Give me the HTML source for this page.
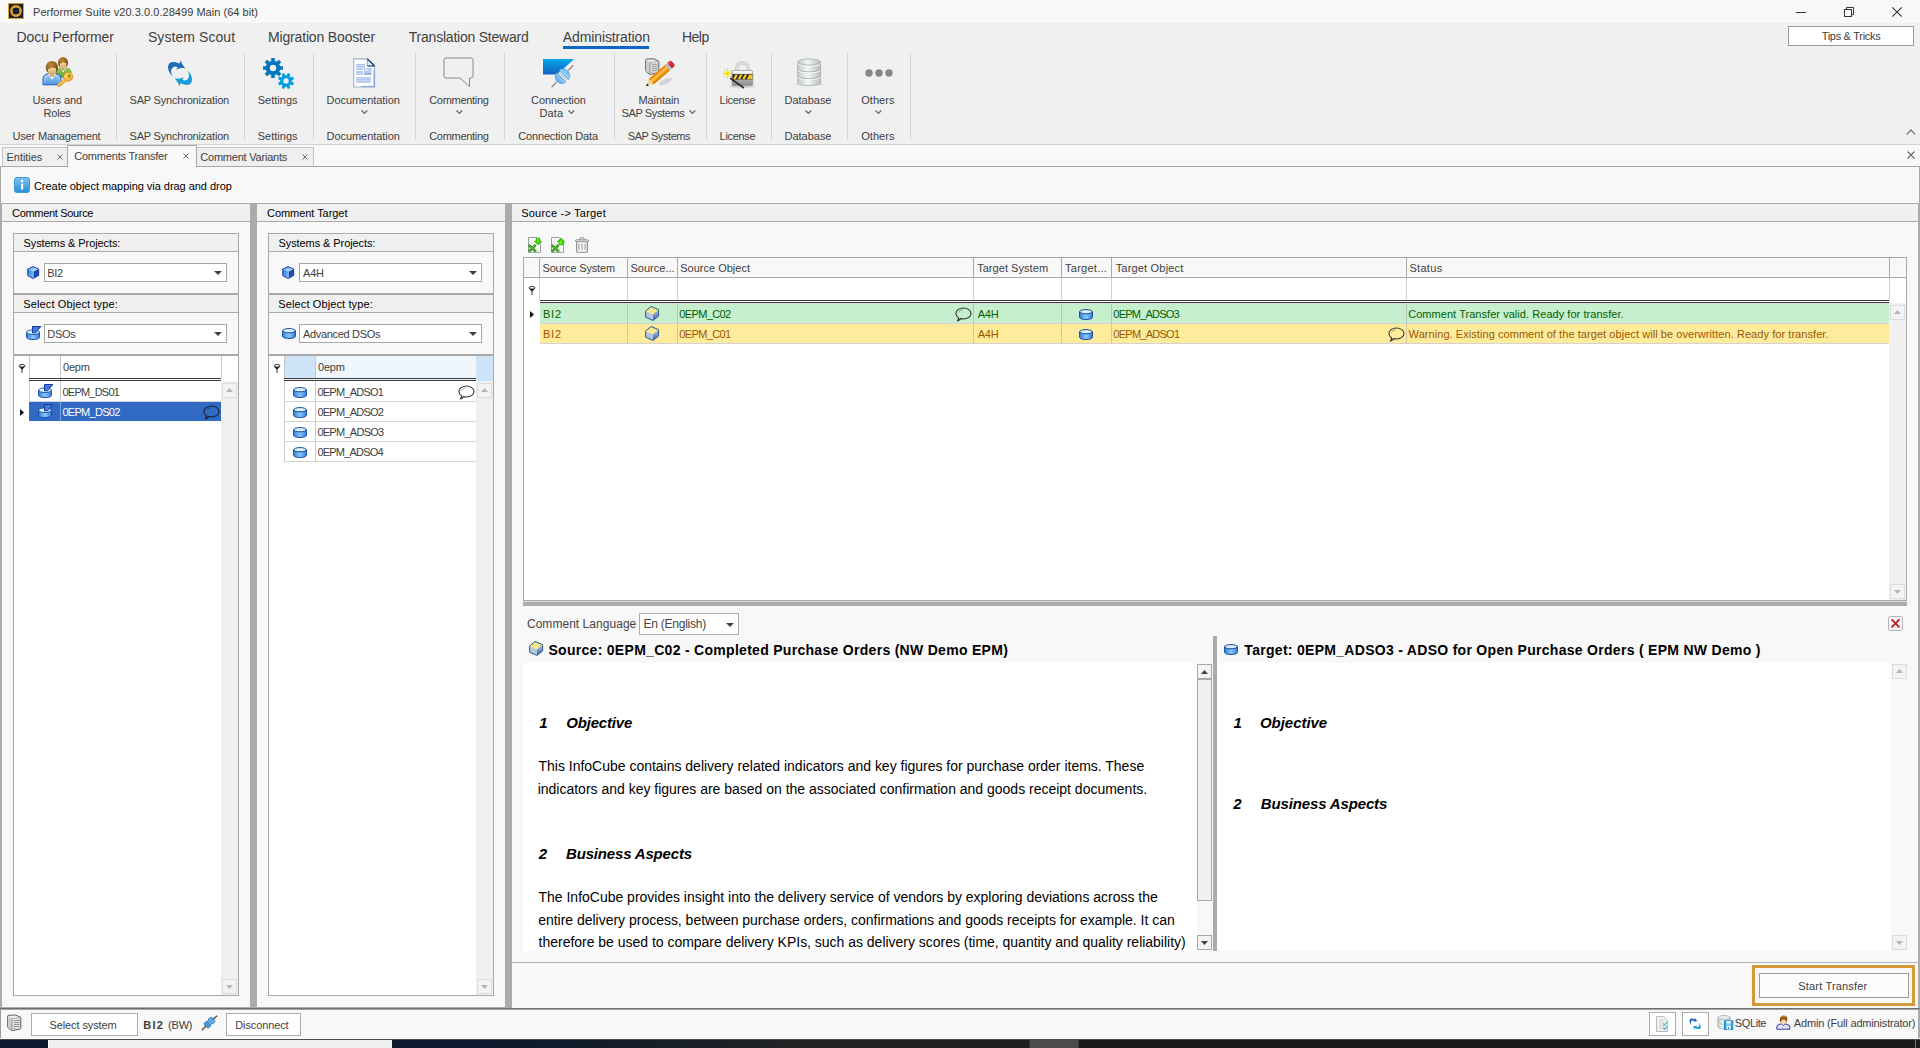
<!DOCTYPE html>
<html lang="en"><head><meta charset="utf-8"><title>Performer Suite - Comments Transfer</title>
<style>
html,body{margin:0;padding:0}
body{width:1920px;height:1048px;overflow:hidden;position:relative;background:#f8f8f8;font-family:"Liberation Sans",sans-serif;font-size:11px;line-height:20px}
div,span,svg,header,nav,main,footer,article{position:absolute}
header,nav,main,footer,article{left:0;top:0}
span{white-space:pre;line-height:20px;height:20px}
svg{overflow:visible}
</style></head>
<body>
<svg width="0" height="0" style="left:0;top:0"><defs>
<linearGradient id="gCylBody" x1="0" x2="1" y1="0" y2="0"><stop offset="0" stop-color="#3f7cdc"/><stop offset=".5" stop-color="#86c8fa"/><stop offset="1" stop-color="#3f7cdc"/></linearGradient>
<linearGradient id="gCubeTop" x1="0" x2="1" y1="0" y2="1"><stop offset="0" stop-color="#4aa8ff"/><stop offset="1" stop-color="#d8eeff"/></linearGradient>
<linearGradient id="gCubeL" x1="0" x2="1" y1="0" y2="1"><stop offset="0" stop-color="#2a78e8"/><stop offset="1" stop-color="#7cc4ff"/></linearGradient>
<linearGradient id="gCubeR" x1="0" x2="1" y1="0" y2="1"><stop offset="0" stop-color="#0a2f9a"/><stop offset="1" stop-color="#2a6cd0"/></linearGradient>
<linearGradient id="gInfo" x1="0" x2="0" y1="0" y2="1"><stop offset="0" stop-color="#7cc6f0"/><stop offset="1" stop-color="#2b8fd6"/></linearGradient>
<linearGradient id="gICr" x1="0" x2="0" y1="0" y2="1"><stop offset="0" stop-color="#b4c4e8"/><stop offset="1" stop-color="#4a58a8"/></linearGradient>
<linearGradient id="gDb" x1="0" x2="1" y1="0" y2="0"><stop offset="0" stop-color="#c2c8ca"/><stop offset=".45" stop-color="#f4f6f6"/><stop offset="1" stop-color="#b6bcbe"/></linearGradient>
<linearGradient id="gConn" x1="0" x2="0" y1="0" y2="1"><stop offset="0" stop-color="#00a8ec"/><stop offset="1" stop-color="#1660c0"/></linearGradient>
<linearGradient id="gLock" x1="0" x2="0" y1="0" y2="1"><stop offset="0" stop-color="#d8d8d8"/><stop offset="1" stop-color="#8c8c8c"/></linearGradient>
<linearGradient id="gShirt" x1="0" x2="0" y1="0" y2="1"><stop offset="0" stop-color="#a8d2f6"/><stop offset="1" stop-color="#4a92e2"/></linearGradient>
<linearGradient id="gDoc" x1="0" x2="1" y1="0" y2="1"><stop offset="0" stop-color="#ffffff"/><stop offset="1" stop-color="#eef2fd"/></linearGradient>
</defs></svg>
<header>
<div style="left:0px;top:0px;width:1920px;height:23px;background:#f8f8f8;"></div>
<svg style="left:8px;top:3px" width="16" height="16" viewBox="0 0 16 16"><rect x="0" y="0" width="16" height="16" fill="#d9a432"/><rect x="1" y="1" width="14" height="14" fill="#17202c"/>
<circle cx="8" cy="8" r="4.6" fill="none" stroke="#e0a530" stroke-width="2.6"/>
<rect x="6.2" y="6.2" width="3.6" height="3.6" fill="#17202c"/>
<path d="M4.2 6.5Q8 3.5 11.6 6M11.8 9.5Q8 12.5 4.4 10" stroke="#17202c" stroke-width=".7" fill="none"/></svg>
<span style="left:33.00px;top:2.00px;color:#3a3a3a;font-size:11px;letter-spacing:0.042px;">Performer Suite v20.3.0.0.28499 Main (64 bit)</span>
<div style="left:1796px;top:12px;width:10px;height:1px;background:#333;"></div>
<svg style="left:1844px;top:7px" width="10" height="10" viewBox="0 0 10 10"><path d="M2.5 2.5V0.5H9.5V7.5H7.5" fill="none" stroke="#333" stroke-width="1"/><rect x=".5" y="2.5" width="7" height="7" fill="none" stroke="#333" stroke-width="1"/></svg>
<svg style="left:1892px;top:7px" width="10" height="10" viewBox="0 0 10 10"><path d="M0.3 0.3L9.7 9.7M9.7 0.3L0.3 9.7" stroke="#333" stroke-width="1.1"/></svg>
</header>
<nav>
<div style="left:0px;top:23px;width:1920px;height:121px;background:#f0f0f0;"></div>
<div style="left:0px;top:144px;width:1920px;height:1px;background:#d2d2d2;"></div>
<span style="left:16.46px;top:27.00px;color:#404040;font-size:14px;letter-spacing:-0.102px;">Docu Performer</span>
<span style="left:147.97px;top:27.00px;color:#404040;font-size:14px;letter-spacing:0.067px;">System Scout</span>
<span style="left:267.96px;top:27.00px;color:#404040;font-size:14px;letter-spacing:-0.158px;">Migration Booster</span>
<span style="left:408.82px;top:27.00px;color:#404040;font-size:14px;letter-spacing:-0.224px;">Translation Steward</span>
<span style="left:562.87px;top:27.00px;color:#404040;font-size:14px;letter-spacing:-0.123px;">Administration</span>
<span style="left:681.96px;top:27.00px;color:#404040;font-size:14px;letter-spacing:-0.498px;">Help</span>
<div style="left:563px;top:46px;width:86px;height:3px;background:#0a64c2;"></div>
<div style="left:1788px;top:26px;width:126px;height:20px;background:#fff;border:1px solid #9b9b9b;box-sizing:border-box;"></div>
<span style="left:1821.64px;top:26.00px;color:#404040;font-size:11px;letter-spacing:-0.287px;">Tips &amp; Tricks</span>
<svg style="left:1906px;top:129px" width="10" height="6" viewBox="0 0 10 6"><path d="M0.7 5.4L5 1.1L9.3 5.4" fill="none" stroke="#6a6a6a" stroke-width="1.3"/></svg>
<div style="left:116px;top:53px;width:1px;height:87px;background:#d4d4d4;"></div>
<div style="left:244px;top:53px;width:1px;height:87px;background:#d4d4d4;"></div>
<div style="left:313px;top:53px;width:1px;height:87px;background:#d4d4d4;"></div>
<div style="left:415px;top:53px;width:1px;height:87px;background:#d4d4d4;"></div>
<div style="left:504px;top:53px;width:1px;height:87px;background:#d4d4d4;"></div>
<div style="left:614px;top:53px;width:1px;height:87px;background:#d4d4d4;"></div>
<div style="left:706px;top:53px;width:1px;height:87px;background:#d4d4d4;"></div>
<div style="left:771px;top:53px;width:1px;height:87px;background:#d4d4d4;"></div>
<div style="left:847px;top:53px;width:1px;height:87px;background:#d4d4d4;"></div>
<div style="left:910px;top:53px;width:1px;height:87px;background:#d4d4d4;"></div>
<svg style="left:41px;top:56px" width="32" height="32" viewBox="0 0 32 32"><defs><radialGradient id="gHair" cx=".4" cy=".3" r=".8"><stop offset="0" stop-color="#c08a3a"/><stop offset="1" stop-color="#6e3a12"/></radialGradient>
<linearGradient id="gFace" x1="0" x2="0" y1="0" y2="1"><stop offset="0" stop-color="#f6e09a"/><stop offset="1" stop-color="#c89a58"/></linearGradient>
<linearGradient id="gGreen" x1="0" x2="0" y1="0" y2="1"><stop offset="0" stop-color="#9cc860"/><stop offset="1" stop-color="#5e9a2a"/></linearGradient>
<linearGradient id="gKey" x1="0" x2="1" y1="0" y2="1"><stop offset="0" stop-color="#ffe27a"/><stop offset="1" stop-color="#f0a020"/></linearGradient></defs>
<path d="M14.8 21.6V16.5Q14.8 12.6 19 12H26Q30.1 12.6 30.1 16.5V21.6Z" fill="url(#gGreen)" stroke="#6a9a3a" stroke-width=".6"/>
<path d="M19.4 12.2L22.2 16.4L25 12.2Z" fill="#fff"/>
<ellipse cx="22" cy="6.6" rx="5.1" ry="5.6" fill="url(#gHair)"/>
<path d="M18.9 7.6Q20.6 7.6 22 6.2Q23.4 7.2 25.2 6.8V10.6Q25.2 12.2 23.6 12.6V14.4H20.4V12.6Q18.9 12 18.9 10.6Z" fill="url(#gFace)"/>
<path d="M2 28.8V23.2Q2 18.4 7 17.8H15Q19.8 18.4 19.8 23.2V28.8Z" fill="url(#gShirt)" stroke="#1a5ec8" stroke-width="1"/>
<path d="M3.4 27.6V23.4Q3.4 19.6 7.2 19H14.8Q18.4 19.6 18.4 23.4V27.6" fill="none" stroke="#cfe6fb" stroke-width=".7" opacity=".8"/>
<path d="M7.2 18L11 23.6L14.8 18Z" fill="#fff"/>
<ellipse cx="10.9" cy="11.4" rx="6.1" ry="6.5" fill="url(#gHair)"/>
<path d="M7 13Q9.2 13 11 11.2Q12.8 12.6 15 12V16.2Q15 18 13.2 18.6V20.4H9V18.6Q7 18 7 16.2Z" fill="url(#gFace)"/>
<path d="M16.8 30.2L16.6 28.4L23.4 22.2L25.6 24.6L23 27L21.6 26.8L21.4 28.4L19.8 28.4L19.6 30L18 30.4Z" fill="url(#gKey)" stroke="#d88a18" stroke-width=".7" stroke-linejoin="round"/>
<circle cx="27.2" cy="20.8" r="4.5" fill="url(#gKey)" stroke="#d88a18" stroke-width=".8"/>
<circle cx="28.1" cy="19.9" r="1.3" fill="#5a9a32" stroke="#d88a18" stroke-width=".4"/></svg>
<svg style="left:167px;top:59px" width="26.0" height="29.0" viewBox="0 0 26 29"><path d="M5.7 17.7C2 14 0 9 1.6 5.6C3 2.6 6.5 2.2 12.8 4.6L13.5 1.5C15 5 17 8 18.4 9.5C15 8.6 12 9.4 9 10.6L10.8 8.4C8.6 6.6 5.6 7.2 4.4 10.4C3.6 12.8 4.4 15.4 5.7 17.7Z" fill="#1c6cba"/><path d="M5.7 17.7C2 14 0 9 1.6 5.6C3 2.6 6.5 2.2 12.8 4.6L13.5 1.5C15 5 17 8 18.4 9.5C15 8.6 12 9.4 9 10.6L10.8 8.4C8.6 6.6 5.6 7.2 4.4 10.4C3.6 12.8 4.4 15.4 5.7 17.7Z" fill="#189cdc" transform="rotate(180 13.05 14.4)"/></svg>
<svg style="left:263px;top:57px" width="32" height="32" viewBox="0 0 32 32"><path d="M19.95 9.26L19.95 12.74L17.07 12.82L16.28 14.72L18.26 16.81L15.81 19.26L13.72 17.28L11.82 18.07L11.74 20.95L8.26 20.95L8.18 18.07L6.28 17.28L4.19 19.26L1.74 16.81L3.72 14.72L2.93 12.82L0.05 12.74L0.05 9.26L2.93 9.18L3.72 7.28L1.74 5.19L4.19 2.74L6.28 4.72L8.18 3.93L8.26 1.05L11.74 1.05L11.82 3.93L13.72 4.72L15.81 2.74L18.26 5.19L16.28 7.28L17.07 9.18ZM13.2 11A3.2 3.2 0 1 0 6.8 11A3.2 3.2 0 1 0 13.2 11Z" fill="#0075c2" fill-rule="evenodd"/>
<path d="M31.00 25.79L29.92 28.39L27.72 27.54L26.54 28.72L27.39 30.92L24.79 32.00L23.83 29.84L22.17 29.84L21.21 32.00L18.61 30.92L19.46 28.72L18.28 27.54L16.08 28.39L15.00 25.79L17.16 24.83L17.16 23.17L15.00 22.21L16.08 19.61L18.28 20.46L19.46 19.28L18.61 17.08L21.21 16.00L22.17 18.16L23.83 18.16L24.79 16.00L27.39 17.08L26.54 19.28L27.72 20.46L29.92 19.61L31.00 22.21L28.84 23.17L28.84 24.83ZM25.7 24A2.7 2.7 0 1 0 20.3 24A2.7 2.7 0 1 0 25.7 24Z" fill="#00a0e3" fill-rule="evenodd"/></svg>
<svg style="left:353px;top:57.5px" width="23" height="30" viewBox="0 0 23 30"><path d="M0.7 0.9H14.3L21.6 8V29H0.7Z" fill="#fff" stroke="#9db0d0" stroke-width="1.1"/>
<path d="M21 12V28.4H8" fill="none" stroke="#6f93e4" stroke-width="1" opacity=".8"/>
<path d="M14.3 0.9V8H21.6Z" fill="#dbe7fa" stroke="#8aa0c8" stroke-width="1"/><path d="M14.3 0.9L21.6 8" stroke="#1f3a6a" stroke-width="1.3"/><path d="M14.3 8H21.6" stroke="#2a4a80" stroke-width="1"/>
<g stroke="#7f9fe0" stroke-width="1"><path d="M3 6.9H12M3 8.9H12M3 11H10M3 14H10M3 16H10M3 19.9H18M3 21.9H18M3 23.9H18"/></g>
<rect x="11.2" y="10.6" width="6.8" height="5.8" fill="#b9cdf0" stroke="#9ab4e4" stroke-width=".6"/><path d="M11.8 11.2H15L12.4 13.6Z" fill="#f4f8fe"/><path d="M11.2 15.9H18" stroke="#7a9ad6" stroke-width="1"/></svg>
<svg style="left:443.3px;top:57.4px" width="31" height="31" viewBox="0 0 31 31"><path d="M3 1H28Q30 1 30 3V19Q30 21 28 21H26.5V29.5L17 21H3Q1 21 1 19V3Q1 1 3 1Z" fill="none" stroke="#8a8a8a" stroke-width="1" stroke-linejoin="round"/></svg>
<svg style="left:542px;top:58px" width="33" height="30" viewBox="0 0 33 30"><path d="M1 1H32L15.4 16.5H1Z" fill="url(#gConn)"/>
<g transform="rotate(-45 20.5 18.2)"><path d="M5 18.2H12M29 18.2H36" stroke="#8e8e8e" stroke-width="1.5"/><path d="M11.4 18.2L14 16.6V19.8ZM29.6 18.2L27 16.6V19.8Z" fill="#b8b8b8"/>
<path d="M19 11.6V24.8Q13 24 13 18.2T19 11.6Z" fill="#6cb4f0" stroke="#4a94dc" stroke-width=".5"/><path d="M22 11.6V24.8Q28 24 28 18.2T22 11.6Z" fill="#7cc0f4" stroke="#4a94dc" stroke-width=".5"/>
<path d="M17.2 12.2V24.2M23.8 12.2V24.2" stroke="#bfe0fa" stroke-width=".8"/><rect x="19.4" y="13" width="2.2" height="10.4" fill="#e8e4dc"/><path d="M20.5 13V23.4" stroke="#a8a8a8" stroke-width=".6"/></g></svg>
<svg style="left:645px;top:57px" width="31" height="31" viewBox="0 0 31 31"><g transform="translate(0,0.8)"><path d="M0.6 2.4Q0.6 1.4 1.6 1.3L8.4 1L13.4 3.2Q13.8 3.4 13.8 4V14Q13.8 14.8 13 15L5.4 16.6Q4.8 16.7 4.2 16.3L1 13.6Q0.6 13.3 0.6 12.8Z" fill="#ececec" stroke="#5c5c5c" stroke-width="1" stroke-linejoin="round"/>
<path d="M0.9 2.2L5 4.6V16.4L0.9 13.2Z" fill="#cdcdcd"/>
<path d="M5 4.6L13.6 3.8" stroke="#8a8a8a" stroke-width=".6"/><path d="M5 4.6V16.4" stroke="#7a7a7a" stroke-width=".8"/>
<g stroke="#8c8c8c" stroke-width="1"><path d="M6.6 6.4H12.6M6.6 8.4H12.6M6.6 10.4H12.6M6.6 12.4H12.6"/></g><path d="M6.6 14.3H12.6" stroke="#9a9a9a" stroke-width="1"/><rect x="8.6" y="13.7" width="1.3" height="1.2" fill="#fff"/><rect x="10.6" y="13.7" width="1.3" height="1.2" fill="#fff"/></g>
<ellipse cx="20.5" cy="24.6" rx="7" ry="2.2" fill="#b4b4b4" opacity=".5" transform="rotate(-25 20.5 24.6)"/>
<g transform="translate(-0.8,-0.7) rotate(-41 16 17.5)"><rect x="4" y="14" width="21.4" height="7.2" fill="#f8a410"/><rect x="4" y="14" width="21.4" height="2.2" fill="#ef8a10"/><rect x="4" y="16.2" width="21.4" height="1.6" fill="#fcc864"/><rect x="4" y="19.4" width="21.4" height="1.8" fill="#e08408"/>
<rect x="25.4" y="14" width="3" height="7.2" fill="#b8bcbc"/><path d="M28.4 14H31Q33 14 33 16V19.2Q33 21.2 31 21.2H28.4Z" fill="#cc2a34"/><path d="M28.4 15.4H32.6" stroke="#e8606a" stroke-width="1"/>
<path d="M4 14L-2.8 17.6L4 21.2Z" fill="#ead9a8"/><path d="M-0.2 16.2L-3 17.6L-0.2 19Z" fill="#1c1c1c"/></g></svg>
<svg style="left:722px;top:60px" width="32" height="29" viewBox="0 0 32 29"><ellipse cx="20" cy="26.4" rx="13" ry="1.8" fill="#c8c8c8" opacity=".55"/>
<path d="M14.8 11V8.6C14.8 4.6 17.2 3 20.4 3S26.1 4.6 26.1 8.6V11" fill="none" stroke="#cfcfcf" stroke-width="3.7"/>
<path d="M14.8 11V8.6C14.8 4.6 17.2 3 20.4 3S26.1 4.6 26.1 8.6V11" fill="none" stroke="#e6e6e6" stroke-width="1.2"/>
<rect x="10" y="10.4" width="20.8" height="15.4" rx="1.6" fill="url(#gLock)" stroke="#9a9a9a" stroke-width=".7"/>
<rect x="10.8" y="11" width="19.2" height="2.6" rx="1" fill="#f6f6f6"/>
<rect x="10.4" y="14.1" width="20" height="5.4" fill="#20242c"/>
<g fill="#f8c420"><polygon points="11,19.2 13.4,14.4 16,14.4 13.6,19.2"/><polygon points="15.6,19.2 18,14.4 20.6,14.4 18.2,19.2"/><polygon points="20.2,19.2 22.6,14.4 25.2,14.4 22.8,19.2"/><polygon points="24.8,19.2 27.2,14.4 29.6,14.4 30.4,16 30.4,19.2"/></g>
<path d="M8.3 18.3L21.9 28" stroke="#2c2c2c" stroke-width="1.7"/>
<g stroke="#9a9a5a" stroke-width=".8" opacity=".8"><path d="M5.45 8.8V18.4M0.8 13.6H10.2M2.2 10.4L8.7 16.8M8.7 10.4L2.2 16.8"/></g><circle cx="5.45" cy="13.6" r="3.4" fill="#fdf28a"/><circle cx="5.45" cy="13.6" r="2" fill="#f8e000"/></svg>
<svg style="left:796.8px;top:57.7px" width="24.3" height="28.4" viewBox="0 0 25 29"><ellipse cx="12.5" cy="27" rx="15" ry="1.8" fill="#c4c4c4" opacity=".45"/>
<path d="M0.7 4V25C0.7 26.8 6 28.2 12.5 28.2S24.3 26.8 24.3 25V4Z" fill="url(#gDb)" stroke="#aab2b6" stroke-width=".9"/>
<path d="M0.7 11C0.7 12.8 6 14.2 12.5 14.2S24.3 12.8 24.3 11M0.7 18C0.7 19.8 6 21.2 12.5 21.2S24.3 19.8 24.3 18" fill="none" stroke="#a4acb0" stroke-width="1"/>
<path d="M1.2 12.2C1.2 14 6 15.3 12.5 15.3S23.8 14 23.8 12.2M1.2 19.2C1.2 21 6 22.3 12.5 22.3S23.8 21 23.8 19.2M1.2 5.4C1.2 7 6 8.3 12.5 8.3S23.8 7 23.8 5.4" fill="none" stroke="#fbfbfb" stroke-width="1"/>
<ellipse cx="12.5" cy="4" rx="11.8" ry="3.1" fill="url(#gDb)" stroke="#aab2b6" stroke-width=".9"/></svg>
<svg style="left:865px;top:69px" width="28" height="8" viewBox="0 0 28 8"><circle cx="4" cy="4" r="3.7" fill="#868686"/><circle cx="14" cy="4" r="3.7" fill="#868686"/><circle cx="24" cy="4" r="3.7" fill="#868686"/></svg>
<span style="left:32.45px;top:90.00px;color:#404040;font-size:11px;letter-spacing:-0.057px;">Users and</span>
<span style="left:43.50px;top:103.00px;color:#404040;font-size:11px;letter-spacing:-0.209px;">Roles</span>
<span style="left:129.50px;top:90.00px;color:#404040;font-size:11px;letter-spacing:-0.191px;">SAP Synchronization</span>
<span style="left:257.75px;top:90.00px;color:#404040;font-size:11px;letter-spacing:0.004px;">Settings</span>
<span style="left:326.50px;top:90.00px;color:#404040;font-size:11px;letter-spacing:-0.052px;">Documentation</span>
<span style="left:429.22px;top:90.00px;color:#404040;font-size:11px;letter-spacing:-0.292px;">Commenting</span>
<span style="left:531.07px;top:90.00px;color:#404040;font-size:11px;letter-spacing:-0.096px;">Connection</span>
<span style="left:539.60px;top:103.00px;color:#404040;font-size:11px;letter-spacing:0.077px;">Data</span>
<span style="left:638.40px;top:90.00px;color:#404040;font-size:11px;letter-spacing:-0.079px;">Maintain</span>
<span style="left:621.50px;top:103.00px;color:#404040;font-size:11px;letter-spacing:-0.384px;">SAP Systems</span>
<span style="left:719.60px;top:90.00px;color:#404040;font-size:11px;letter-spacing:-0.313px;">License</span>
<span style="left:784.60px;top:90.00px;color:#404040;font-size:11px;letter-spacing:-0.030px;">Database</span>
<span style="left:861.13px;top:90.00px;color:#404040;font-size:11px;letter-spacing:0.077px;">Others</span>
<svg style="left:360.5px;top:110px" width="7" height="5" viewBox="0 0 7 5"><path d="M0.5 0.5L3.4 3.3L6.3 0.5" fill="none" stroke="#6c6c6c" stroke-width="1.3"/></svg>
<svg style="left:455.5px;top:110px" width="7" height="5" viewBox="0 0 7 5"><path d="M0.5 0.5L3.4 3.3L6.3 0.5" fill="none" stroke="#6c6c6c" stroke-width="1.3"/></svg>
<svg style="left:568px;top:110px" width="7" height="5" viewBox="0 0 7 5"><path d="M0.5 0.5L3.4 3.3L6.3 0.5" fill="none" stroke="#6c6c6c" stroke-width="1.3"/></svg>
<svg style="left:688.5px;top:110px" width="7" height="5" viewBox="0 0 7 5"><path d="M0.5 0.5L3.4 3.3L6.3 0.5" fill="none" stroke="#6c6c6c" stroke-width="1.3"/></svg>
<svg style="left:804.5px;top:110px" width="7" height="5" viewBox="0 0 7 5"><path d="M0.5 0.5L3.4 3.3L6.3 0.5" fill="none" stroke="#6c6c6c" stroke-width="1.3"/></svg>
<svg style="left:875px;top:110px" width="7" height="5" viewBox="0 0 7 5"><path d="M0.5 0.5L3.4 3.3L6.3 0.5" fill="none" stroke="#6c6c6c" stroke-width="1.3"/></svg>
<span style="left:12.45px;top:126.00px;color:#404040;font-size:11px;letter-spacing:-0.162px;">User Management</span>
<span style="left:129.50px;top:126.00px;color:#404040;font-size:11px;letter-spacing:-0.191px;">SAP Synchronization</span>
<span style="left:257.75px;top:126.00px;color:#404040;font-size:11px;letter-spacing:0.004px;">Settings</span>
<span style="left:326.50px;top:126.00px;color:#404040;font-size:11px;letter-spacing:-0.052px;">Documentation</span>
<span style="left:429.22px;top:126.00px;color:#404040;font-size:11px;letter-spacing:-0.292px;">Commenting</span>
<span style="left:518.22px;top:126.00px;color:#404040;font-size:11px;letter-spacing:-0.154px;">Connection Data</span>
<span style="left:627.75px;top:126.00px;color:#404040;font-size:11px;letter-spacing:-0.422px;">SAP Systems</span>
<span style="left:719.60px;top:126.00px;color:#404040;font-size:11px;letter-spacing:-0.313px;">License</span>
<span style="left:784.60px;top:126.00px;color:#404040;font-size:11px;letter-spacing:-0.030px;">Database</span>
<span style="left:861.13px;top:126.00px;color:#404040;font-size:11px;letter-spacing:0.077px;">Others</span>
</nav>
<main>
<div style="left:0px;top:145px;width:1920px;height:22px;background:#f8f8f8;"></div>
<div style="left:0px;top:166px;width:1920px;height:1px;background:#a9a9a9;"></div>
<div style="left:2px;top:147px;width:66px;height:20px;background:#efefef;border:1px solid #c4c4c4;box-sizing:border-box;border-bottom:1px solid #a9a9a9;"></div>
<div style="left:196px;top:147px;width:118px;height:20px;background:#efefef;border:1px solid #c4c4c4;box-sizing:border-box;border-bottom:1px solid #a9a9a9;"></div>
<div style="left:67px;top:145px;width:130px;height:22px;background:#f8f8f8;border:1px solid #a9a9a9;box-sizing:border-box;border-bottom:none;"></div>
<span style="left:6.50px;top:147.00px;color:#404040;font-size:11px;letter-spacing:-0.032px;">Entities</span>
<svg style="left:57px;top:154px" width="6" height="6" viewBox="0 0 6 6"><path d="M0.5 0.5L5.5 5.5M5.5 0.5L0.5 5.5" stroke="#6e6e6e" stroke-width="1" fill="none"/></svg>
<span style="left:74.17px;top:146.00px;color:#404040;font-size:11px;letter-spacing:-0.190px;">Comments Transfer</span>
<svg style="left:183px;top:153px" width="6" height="6" viewBox="0 0 6 6"><path d="M0.5 0.5L5.5 5.5M5.5 0.5L0.5 5.5" stroke="#6e6e6e" stroke-width="1" fill="none"/></svg>
<span style="left:200.27px;top:147.00px;color:#404040;font-size:11px;letter-spacing:-0.213px;">Comment Variants</span>
<svg style="left:302px;top:154px" width="6" height="6" viewBox="0 0 6 6"><path d="M0.5 0.5L5.5 5.5M5.5 0.5L0.5 5.5" stroke="#6e6e6e" stroke-width="1" fill="none"/></svg>
<svg style="left:1907px;top:151.2px" width="8" height="8" viewBox="0 0 8 8"><path d="M0.5 0.5L7.5 7.5M7.5 0.5L0.5 7.5" stroke="#6a6a6a" stroke-width="1.1" fill="none"/></svg>
<div style="left:0px;top:167px;width:1920px;height:843px;background:#f8f8f8;"></div>
<div style="left:0px;top:167px;width:1px;height:37px;background:#a9a9a9;"></div>
<div style="left:1919px;top:167px;width:1px;height:37px;background:#a9a9a9;"></div>
<svg style="left:14px;top:177px" width="16" height="16" viewBox="0 0 16 16"><rect x=".5" y=".5" width="15" height="15" rx="2.5" fill="url(#gInfo)" stroke="#3f9ad8" stroke-width="1"/>
<rect x="7" y="6.5" width="2.2" height="6" rx=".6" fill="#fff"/><circle cx="8.1" cy="4" r="1.3" fill="#fff"/></svg>
<span style="left:33.97px;top:176.00px;color:#000;font-size:11px;letter-spacing:-0.038px;">Create object mapping via drag and drop</span>
<div style="left:0px;top:203px;width:2px;height:805px;background:#ababab;"></div>
<div style="left:2px;top:203px;width:248px;height:1px;background:#a9a9a9;"></div>
<div style="left:2px;top:204px;width:248px;height:17px;background:#f0f0f0;"></div>
<div style="left:2px;top:221px;width:248px;height:1px;background:#a9a9a9;"></div>
<span style="left:12.07px;top:203.00px;color:#000;font-size:11px;letter-spacing:-0.324px;">Comment Source</span>
<div style="left:250px;top:204px;width:7px;height:804px;background:#ababab;"></div>
<div style="left:257px;top:203px;width:248px;height:1px;background:#a9a9a9;"></div>
<div style="left:257px;top:204px;width:248px;height:17px;background:#f0f0f0;"></div>
<div style="left:257px;top:221px;width:248px;height:1px;background:#a9a9a9;"></div>
<span style="left:267.07px;top:203.00px;color:#000;font-size:11px;letter-spacing:-0.056px;">Comment Target</span>
<div style="left:505px;top:204px;width:7px;height:804px;background:#ababab;"></div>
<div style="left:512px;top:203px;width:1406px;height:1px;background:#a9a9a9;"></div>
<div style="left:512px;top:204px;width:1406px;height:17px;background:#f0f0f0;"></div>
<div style="left:512px;top:221px;width:1406px;height:1px;background:#a9a9a9;"></div>
<span style="left:521.20px;top:203.00px;color:#000;font-size:11px;letter-spacing:0.208px;">Source -> Target</span>
<div style="left:1918px;top:203px;width:2px;height:836px;background:#ababab;"></div>
<div style="left:0px;top:203px;width:1920px;height:1px;background:#a9a9a9;"></div>
<div style="left:0px;top:1007px;width:512px;height:1px;background:#ababab;"></div>
<div style="left:13px;top:233px;width:226px;height:61px;border:1px solid #a9a9a9;box-sizing:border-box;"></div>
<div style="left:14px;top:234px;width:224px;height:17px;background:#f0f0f0;"></div>
<div style="left:14px;top:251px;width:224px;height:1px;background:#a9a9a9;"></div>
<span style="left:23.50px;top:233.00px;color:#000;font-size:11px;letter-spacing:-0.083px;">Systems &amp; Projects:</span>
<svg style="left:26.9px;top:266.3px" width="12.2" height="13.2" viewBox="0 0 13 14"><polygon points="6.5,0.6 12.4,3.2 6.8,6.2 0.8,3.2" fill="url(#gCubeTop)"/>
<polygon points="0.8,3.2 6.8,6.2 6.6,13.4 0.8,10.2" fill="url(#gCubeL)"/>
<polygon points="6.8,6.2 12.4,3.2 12.4,10 6.6,13.4" fill="url(#gCubeR)"/>
<polygon points="6.5,0.6 12.4,3.2 12.4,10 6.6,13.4 0.8,10.2 0.8,3.2" fill="none" stroke="#1a2c9c" stroke-width="1" stroke-linejoin="round"/>
<path d="M6.8 6.2V13" stroke="#cfe6ff" stroke-width=".7" opacity=".8"/></svg>
<div style="left:44px;top:263px;width:183px;height:19px;background:#fff;border:1px solid #a6a6a6;box-sizing:border-box;"></div>
<span style="left:47.20px;top:263.00px;color:#404040;font-size:11px;letter-spacing:-0.250px;">BI2</span>
<svg style="left:214px;top:271px" width="8" height="4" viewBox="0 0 8 4"><polygon points="0,0 8,0 4.0,4" fill="#404040"/></svg>
<div style="left:13px;top:294px;width:226px;height:61px;border:1px solid #a9a9a9;box-sizing:border-box;"></div>
<div style="left:14px;top:295px;width:224px;height:17px;background:#f0f0f0;"></div>
<div style="left:14px;top:312px;width:224px;height:1px;background:#a9a9a9;"></div>
<span style="left:23.30px;top:294.00px;color:#000;font-size:11px;letter-spacing:0.116px;">Select Object type:</span>
<div style="left:44px;top:324px;width:183px;height:19px;background:#fff;border:1px solid #a6a6a6;box-sizing:border-box;"></div>
<span style="left:47.20px;top:324.00px;color:#404040;font-size:11px;letter-spacing:-0.250px;">DSOs</span>
<svg style="left:214px;top:332px" width="8" height="4" viewBox="0 0 8 4"><polygon points="0,0 8,0 4.0,4" fill="#404040"/></svg>
<div style="left:13px;top:355px;width:226px;height:641px;background:#fff;border:1px solid #a9a9a9;box-sizing:border-box;"></div>
<svg style="left:17.5px;top:363.5px" width="8" height="10" viewBox="0 0 8 10"><ellipse cx="4" cy="1.9" rx="3" ry="1.4" fill="#fff" stroke="#222" stroke-width=".9"/>
<path d="M1.2 2.7L3.55 5.4V8.9H4.45V5.4L6.8 2.7Z" fill="#222"/></svg>
<div style="left:221px;top:381px;width:17px;height:614px;background:#f0f0f0;"></div>
<div style="left:222px;top:383px;width:15px;height:15px;background:#f3f3f3;border:1px solid #dcdcdc;box-sizing:border-box;"></div>
<svg style="left:226.0px;top:388.0px" width="7" height="4" viewBox="0 0 7 4"><polygon points="0,4 7,4 3.5,0" fill="#b4b4b4"/></svg>
<div style="left:222px;top:979px;width:15px;height:15px;background:#f3f3f3;border:1px solid #dcdcdc;box-sizing:border-box;"></div>
<svg style="left:226.0px;top:985.0px" width="7" height="4" viewBox="0 0 7 4"><polygon points="0,0 7,0 3.5,4" fill="#b4b4b4"/></svg>
<div style="left:268px;top:233px;width:226px;height:61px;border:1px solid #a9a9a9;box-sizing:border-box;"></div>
<div style="left:269px;top:234px;width:224px;height:17px;background:#f0f0f0;"></div>
<div style="left:269px;top:251px;width:224px;height:1px;background:#a9a9a9;"></div>
<span style="left:278.50px;top:233.00px;color:#000;font-size:11px;letter-spacing:-0.083px;">Systems &amp; Projects:</span>
<svg style="left:281.9px;top:266.3px" width="12.2" height="13.2" viewBox="0 0 13 14"><polygon points="6.5,0.6 12.4,3.2 6.8,6.2 0.8,3.2" fill="url(#gCubeTop)"/>
<polygon points="0.8,3.2 6.8,6.2 6.6,13.4 0.8,10.2" fill="url(#gCubeL)"/>
<polygon points="6.8,6.2 12.4,3.2 12.4,10 6.6,13.4" fill="url(#gCubeR)"/>
<polygon points="6.5,0.6 12.4,3.2 12.4,10 6.6,13.4 0.8,10.2 0.8,3.2" fill="none" stroke="#1a2c9c" stroke-width="1" stroke-linejoin="round"/>
<path d="M6.8 6.2V13" stroke="#cfe6ff" stroke-width=".7" opacity=".8"/></svg>
<div style="left:299px;top:263px;width:183px;height:19px;background:#fff;border:1px solid #a6a6a6;box-sizing:border-box;"></div>
<span style="left:303.06px;top:263.00px;color:#404040;font-size:11px;letter-spacing:-0.250px;">A4H</span>
<svg style="left:469px;top:271px" width="8" height="4" viewBox="0 0 8 4"><polygon points="0,0 8,0 4.0,4" fill="#404040"/></svg>
<div style="left:268px;top:294px;width:226px;height:61px;border:1px solid #a9a9a9;box-sizing:border-box;"></div>
<div style="left:269px;top:295px;width:224px;height:17px;background:#f0f0f0;"></div>
<div style="left:269px;top:312px;width:224px;height:1px;background:#a9a9a9;"></div>
<span style="left:278.30px;top:294.00px;color:#000;font-size:11px;letter-spacing:0.116px;">Select Object type:</span>
<div style="left:299px;top:324px;width:183px;height:19px;background:#fff;border:1px solid #a6a6a6;box-sizing:border-box;"></div>
<span style="left:303.06px;top:324.00px;color:#404040;font-size:11px;letter-spacing:-0.324px;">Advanced DSOs</span>
<svg style="left:469px;top:332px" width="8" height="4" viewBox="0 0 8 4"><polygon points="0,0 8,0 4.0,4" fill="#404040"/></svg>
<div style="left:268px;top:355px;width:226px;height:641px;background:#fff;border:1px solid #a9a9a9;box-sizing:border-box;"></div>
<svg style="left:272.5px;top:363.5px" width="8" height="10" viewBox="0 0 8 10"><ellipse cx="4" cy="1.9" rx="3" ry="1.4" fill="#fff" stroke="#222" stroke-width=".9"/>
<path d="M1.2 2.7L3.55 5.4V8.9H4.45V5.4L6.8 2.7Z" fill="#222"/></svg>
<div style="left:476px;top:381px;width:17px;height:614px;background:#f0f0f0;"></div>
<div style="left:477px;top:383px;width:15px;height:15px;background:#f3f3f3;border:1px solid #dcdcdc;box-sizing:border-box;"></div>
<svg style="left:481.0px;top:388.0px" width="7" height="4" viewBox="0 0 7 4"><polygon points="0,4 7,4 3.5,0" fill="#b4b4b4"/></svg>
<div style="left:477px;top:979px;width:15px;height:15px;background:#f3f3f3;border:1px solid #dcdcdc;box-sizing:border-box;"></div>
<svg style="left:481.0px;top:985.0px" width="7" height="4" viewBox="0 0 7 4"><polygon points="0,0 7,0 3.5,4" fill="#b4b4b4"/></svg>
<svg style="left:26px;top:326px" width="16" height="14" viewBox="0 0 16 14"><path d="M0.6 6.3V11.2C0.6 12.7 3.4 13.6 7 13.6S13.4 12.7 13.4 11.2V6.3Z" fill="url(#gCylBody)" stroke="#0a4a9e" stroke-width="1"/>
<ellipse cx="7" cy="6.2" rx="6.4" ry="2.3" fill="#e6effc" stroke="#0a4a9e" stroke-width=".9"/>
<polygon points="6.5,0.5 14.8,0.5 9.6,6.8 6.5,6.8" fill="#4f74dc" stroke="#0b3fa0" stroke-width="1" stroke-linejoin="round"/></svg>
<svg style="left:282px;top:328px" width="14" height="11" viewBox="0 0 14 11"><path d="M0.6 2.8V8.2C0.6 9.6 3.4 10.5 7 10.5S13.4 9.6 13.4 8.2V2.8Z" fill="url(#gCylBody)" stroke="#0a4a9e" stroke-width="1"/>
<ellipse cx="7" cy="2.7" rx="6.3" ry="2.1" fill="#e4eefc" stroke="#0a4a9e" stroke-width="1"/></svg>
<div style="left:29px;top:356px;width:1px;height:65px;background:#c8c8c8;"></div>
<div style="left:60px;top:356px;width:1px;height:46px;background:#c8c8c8;"></div>
<div style="left:221px;top:356px;width:1px;height:22px;background:#c8c8c8;"></div>
<span style="left:62.99px;top:357.00px;color:#404040;font-size:11px;letter-spacing:-0.182px;">0epm</span>
<div style="left:29px;top:378px;width:192px;height:1px;background:#3c3c3c;"></div>
<div style="left:29px;top:380px;width:192px;height:1px;background:#3c3c3c;"></div>
<svg style="left:37.5px;top:384px" width="16" height="14" viewBox="0 0 16 14"><path d="M0.6 6.3V11.2C0.6 12.7 3.4 13.6 7 13.6S13.4 12.7 13.4 11.2V6.3Z" fill="url(#gCylBody)" stroke="#0a4a9e" stroke-width="1"/>
<ellipse cx="7" cy="6.2" rx="6.4" ry="2.3" fill="#e6effc" stroke="#0a4a9e" stroke-width=".9"/>
<polygon points="6.5,0.5 14.8,0.5 9.6,6.8 6.5,6.8" fill="#4f74dc" stroke="#0b3fa0" stroke-width="1" stroke-linejoin="round"/></svg>
<span style="left:62.49px;top:382.00px;color:#404040;font-size:11px;letter-spacing:-0.777px;">0EPM_DS01</span>
<div style="left:29px;top:401px;width:192px;height:1px;background:#d6d6d6;"></div>
<div style="left:29px;top:402px;width:192px;height:19px;background:#316ac5;"></div>
<div style="left:60px;top:402px;width:1px;height:19px;background:#7a9fdc;"></div>
<svg style="left:37.5px;top:404px" width="16" height="14" viewBox="0 0 16 14"><path d="M0.6 6.3V11.2C0.6 12.7 3.4 13.6 7 13.6S13.4 12.7 13.4 11.2V6.3Z" fill="url(#gCylBody)" stroke="#0a4a9e" stroke-width="1"/>
<ellipse cx="7" cy="6.2" rx="6.4" ry="2.3" fill="#e6effc" stroke="#0a4a9e" stroke-width=".9"/>
<polygon points="6.5,0.5 14.8,0.5 9.6,6.8 6.5,6.8" fill="#4f74dc" stroke="#0b3fa0" stroke-width="1" stroke-linejoin="round"/></svg>
<span style="left:62.49px;top:402.00px;color:#fff;font-size:11px;letter-spacing:-0.728px;">0EPM_DS02</span>
<svg style="left:202.5px;top:404.5px" width="17" height="15" viewBox="0 0 17 15"><path d="M8.4 1C12.6 1 16 3.4 16 6.5S12.6 12 8.4 12C7.3 12 6.3 11.85 5.4 11.6C4.6 12.8 3.6 13.6 2.4 14C3.1 13.1 3.5 12 3.5 10.7C1.9 9.7 0.9 8.2 0.9 6.5C0.9 3.4 4.2 1 8.4 1Z" fill="none" stroke="#1c1c2c" stroke-width="1.1" stroke-linejoin="round"/>
<path d="M3.2 5.6C4.2 3.9 6 3 8 2.8" fill="none" stroke="#1c1c2c" stroke-width=".6" opacity=".7"/></svg>
<svg style="left:20px;top:408.5px" width="4" height="7" viewBox="0 0 4 7"><polygon points="0,0 4,3.5 0,7" fill="#111"/></svg>
<div style="left:284px;top:356px;width:31px;height:22px;background:#cde3f7;"></div>
<div style="left:315px;top:356px;width:161px;height:22px;background:#eff7fd;"></div>
<div style="left:476px;top:356px;width:17px;height:25px;background:#cde3f7;"></div>
<div style="left:284px;top:356px;width:1px;height:106px;background:#c8c8c8;"></div>
<div style="left:315px;top:356px;width:1px;height:106px;background:#c8c8c8;"></div>
<span style="left:317.99px;top:357.00px;color:#404040;font-size:11px;letter-spacing:-0.182px;">0epm</span>
<div style="left:284px;top:378px;width:192px;height:1px;background:#3c3c3c;"></div>
<div style="left:284px;top:379px;width:192px;height:1px;background:#eaf2fa;"></div>
<div style="left:284px;top:380px;width:192px;height:1px;background:#3c3c3c;"></div>
<svg style="left:293px;top:386.5px" width="14" height="11" viewBox="0 0 14 11"><path d="M0.6 2.8V8.2C0.6 9.6 3.4 10.5 7 10.5S13.4 9.6 13.4 8.2V2.8Z" fill="url(#gCylBody)" stroke="#0a4a9e" stroke-width="1"/>
<ellipse cx="7" cy="2.7" rx="6.3" ry="2.1" fill="#e4eefc" stroke="#0a4a9e" stroke-width="1"/></svg>
<span style="left:317.39px;top:382.00px;color:#404040;font-size:11px;letter-spacing:-0.756px;">0EPM_ADSO1</span>
<div style="left:284px;top:401px;width:192px;height:1px;background:#d6d6d6;"></div>
<svg style="left:293px;top:406.5px" width="14" height="11" viewBox="0 0 14 11"><path d="M0.6 2.8V8.2C0.6 9.6 3.4 10.5 7 10.5S13.4 9.6 13.4 8.2V2.8Z" fill="url(#gCylBody)" stroke="#0a4a9e" stroke-width="1"/>
<ellipse cx="7" cy="2.7" rx="6.3" ry="2.1" fill="#e4eefc" stroke="#0a4a9e" stroke-width="1"/></svg>
<span style="left:317.39px;top:402.00px;color:#404040;font-size:11px;letter-spacing:-0.759px;">0EPM_ADSO2</span>
<div style="left:284px;top:421px;width:192px;height:1px;background:#d6d6d6;"></div>
<svg style="left:293px;top:426.5px" width="14" height="11" viewBox="0 0 14 11"><path d="M0.6 2.8V8.2C0.6 9.6 3.4 10.5 7 10.5S13.4 9.6 13.4 8.2V2.8Z" fill="url(#gCylBody)" stroke="#0a4a9e" stroke-width="1"/>
<ellipse cx="7" cy="2.7" rx="6.3" ry="2.1" fill="#e4eefc" stroke="#0a4a9e" stroke-width="1"/></svg>
<span style="left:317.39px;top:422.00px;color:#404040;font-size:11px;letter-spacing:-0.728px;">0EPM_ADSO3</span>
<div style="left:284px;top:441px;width:192px;height:1px;background:#d6d6d6;"></div>
<svg style="left:293px;top:446.5px" width="14" height="11" viewBox="0 0 14 11"><path d="M0.6 2.8V8.2C0.6 9.6 3.4 10.5 7 10.5S13.4 9.6 13.4 8.2V2.8Z" fill="url(#gCylBody)" stroke="#0a4a9e" stroke-width="1"/>
<ellipse cx="7" cy="2.7" rx="6.3" ry="2.1" fill="#e4eefc" stroke="#0a4a9e" stroke-width="1"/></svg>
<span style="left:317.39px;top:442.00px;color:#404040;font-size:11px;letter-spacing:-0.797px;">0EPM_ADSO4</span>
<div style="left:284px;top:461px;width:192px;height:1px;background:#d6d6d6;"></div>
<svg style="left:457.5px;top:384.5px" width="17" height="15" viewBox="0 0 17 15"><path d="M8.4 1C12.6 1 16 3.4 16 6.5S12.6 12 8.4 12C7.3 12 6.3 11.85 5.4 11.6C4.6 12.8 3.6 13.6 2.4 14C3.1 13.1 3.5 12 3.5 10.7C1.9 9.7 0.9 8.2 0.9 6.5C0.9 3.4 4.2 1 8.4 1Z" fill="none" stroke="#333" stroke-width="1.1" stroke-linejoin="round"/>
<path d="M3.2 5.6C4.2 3.9 6 3 8 2.8" fill="none" stroke="#333" stroke-width=".6" opacity=".7"/></svg>
<svg style="left:528px;top:237px" width="15" height="16" viewBox="0 0 15 16"><path d="M0.5 0.5H8.2L12.5 4.2V15.3H0.5Z" fill="#fdfdfd" stroke="#9c9c9c" stroke-width="1"/><rect x="2" y="2.6" width="3.4" height="3.6" fill="#ececec"/>
<polygon points="8,1 12,1 12,4 14,4 10,8.2 6,4 8,4" fill="#36cc10" stroke="#28b008" stroke-width=".4" stroke-linejoin="round"/><polygon points="9,2 11,2 11,5 10,6.4 9,5" fill="#8cf000" opacity=".7"/>
<path d="M0.8 8L8 14.6M7.6 8L0.8 14.6" stroke="#1f8a04" stroke-width="2.5"/><path d="M1 8L8.2 14.8M7.4 8.2L1 14.4" stroke="#a4dc84" stroke-width=".7"/></svg>
<svg style="left:551px;top:237px" width="15" height="16" viewBox="0 0 15 16"><path d="M0.5 0.5H8.2L12.5 4.2V15.3H0.5Z" fill="#fdfdfd" stroke="#9c9c9c" stroke-width="1"/><rect x="2" y="2.6" width="3.4" height="3.6" fill="#ececec"/>
<polygon points="10,0.8 14,5 12,5 12,8 8,8 8,5 6,5" fill="#36cc10" stroke="#28b008" stroke-width=".4" stroke-linejoin="round"/><polygon points="10,2.6 11,4 11,7 9,7 9,4" fill="#8cf000" opacity=".7"/>
<path d="M0.8 8L8 14.6M7.6 8L0.8 14.6" stroke="#1f8a04" stroke-width="2.5"/><path d="M1 8L8.2 14.8M7.4 8.2L1 14.4" stroke="#a4dc84" stroke-width=".7"/></svg>
<svg style="left:575px;top:236.5px" width="14" height="16" viewBox="0 0 14 16"><path d="M4.8 3V1.6Q4.8 .9 5.5 .9H8.5Q9.2 .9 9.2 1.6V3" fill="none" stroke="#8a8a8a" stroke-width="1"/>
<rect x=".5" y="2.9" width="13" height="1.8" rx=".9" fill="#fbfbfb" stroke="#8a8a8a" stroke-width="1"/>
<path d="M1.6 5V14Q1.6 15.2 2.8 15.2H11.2Q12.4 15.2 12.4 14V5" fill="none" stroke="#8a8a8a" stroke-width="1.1"/>
<path d="M3.9 6.6V13M7 6.6V13M10.1 6.6V13" stroke="#929292" stroke-width="1"/></svg>
<div style="left:523px;top:257px;width:1384px;height:344px;background:#fff;border:1px solid #a9a9a9;box-sizing:border-box;"></div>
<div style="left:524px;top:258px;width:1382px;height:19px;background:#f8f8f8;"></div>
<div style="left:524px;top:277px;width:1382px;height:1px;background:#a9a9a9;"></div>
<div style="left:539px;top:258px;width:1px;height:20px;background:#a9a9a9;"></div>
<div style="left:539px;top:278px;width:1px;height:22px;background:#d2d2d2;"></div>
<div style="left:627px;top:258px;width:1px;height:20px;background:#a9a9a9;"></div>
<div style="left:627px;top:278px;width:1px;height:22px;background:#d2d2d2;"></div>
<div style="left:677px;top:258px;width:1px;height:20px;background:#a9a9a9;"></div>
<div style="left:677px;top:278px;width:1px;height:22px;background:#d2d2d2;"></div>
<div style="left:973px;top:258px;width:1px;height:20px;background:#a9a9a9;"></div>
<div style="left:973px;top:278px;width:1px;height:22px;background:#d2d2d2;"></div>
<div style="left:1061px;top:258px;width:1px;height:20px;background:#a9a9a9;"></div>
<div style="left:1061px;top:278px;width:1px;height:22px;background:#d2d2d2;"></div>
<div style="left:1111px;top:258px;width:1px;height:20px;background:#a9a9a9;"></div>
<div style="left:1111px;top:278px;width:1px;height:22px;background:#d2d2d2;"></div>
<div style="left:1406px;top:258px;width:1px;height:20px;background:#a9a9a9;"></div>
<div style="left:1406px;top:278px;width:1px;height:22px;background:#d2d2d2;"></div>
<div style="left:1889px;top:258px;width:1px;height:20px;background:#a9a9a9;"></div>
<div style="left:1889px;top:278px;width:1px;height:22px;background:#d2d2d2;"></div>
<span style="left:542.50px;top:258.00px;color:#404040;font-size:11px;letter-spacing:-0.167px;">Source System</span>
<span style="left:630.50px;top:258.00px;color:#404040;font-size:11px;letter-spacing:0.008px;">Source...</span>
<span style="left:680.25px;top:258.00px;color:#404040;font-size:11px;letter-spacing:-0.001px;">Source Object</span>
<span style="left:977.14px;top:258.00px;color:#404040;font-size:11px;letter-spacing:0.051px;">Target System</span>
<span style="left:1065.05px;top:258.00px;color:#404040;font-size:11px;letter-spacing:0.254px;">Target...</span>
<span style="left:1115.64px;top:258.00px;color:#404040;font-size:11px;letter-spacing:0.193px;">Target Object</span>
<span style="left:1409.40px;top:258.00px;color:#404040;font-size:11px;letter-spacing:0.313px;">Status</span>
<svg style="left:527.5px;top:285.5px" width="8" height="10" viewBox="0 0 8 10"><ellipse cx="4" cy="1.9" rx="3" ry="1.4" fill="#fff" stroke="#222" stroke-width=".9"/>
<path d="M1.2 2.7L3.55 5.4V8.9H4.45V5.4L6.8 2.7Z" fill="#222"/></svg>
<div style="left:540px;top:300px;width:1349px;height:1px;background:#3c3c3c;"></div>
<div style="left:540px;top:302px;width:1349px;height:1px;background:#3c3c3c;"></div>
<div style="left:540px;top:303px;width:1349px;height:1px;background:#dadada;"></div>
<div style="left:540px;top:304px;width:1349px;height:19px;background:#c6efce;"></div>
<div style="left:540px;top:323px;width:1349px;height:1px;background:#d4d2d6;"></div>
<div style="left:627px;top:304px;width:1px;height:19px;background:rgba(150,150,160,.45);"></div>
<div style="left:677px;top:304px;width:1px;height:19px;background:rgba(150,150,160,.45);"></div>
<div style="left:973px;top:304px;width:1px;height:19px;background:rgba(150,150,160,.45);"></div>
<div style="left:1061px;top:304px;width:1px;height:19px;background:rgba(150,150,160,.45);"></div>
<div style="left:1111px;top:304px;width:1px;height:19px;background:rgba(150,150,160,.45);"></div>
<div style="left:1406px;top:304px;width:1px;height:19px;background:rgba(150,150,160,.45);"></div>
<span style="left:543.00px;top:304.00px;color:#006100;font-size:11px;letter-spacing:0.785px;">BI2</span>
<svg style="left:645px;top:306px" width="15" height="15" viewBox="0 0 15 15"><polygon points="0.6,5 8,8.2 8,14.4 0.6,11.2" fill="#b2c8de"/>
<polygon points="8,8.2 13.6,3.6 13.6,10 8,14.4" fill="url(#gICr)"/>
<polygon points="6,0.5 13.6,3.6 8,8.2 0.6,5" fill="#fffce8"/>
<g fill="#f0d63c"><polygon points="6,0.9 7.9,1.7 6.2,3.1 4.3,2.3"/><polygon points="8.7,2 10.6,2.8 8.9,4.2 7,3.4"/><polygon points="11.4,3.1 13,3.8 11.6,5.3 9.7,4.5"/>
<polygon points="3.7,2.7 5.6,3.5 3.9,4.9 2,4.1"/><polygon points="6.4,3.8 8.3,4.6 6.6,6 4.7,5.2"/><polygon points="9.1,4.9 11,5.7 9.3,7.1 7.4,6.3"/>
<polygon points="1.6,4.5 3.3,5.3 2.2,6 0.9,5"/><polygon points="4.1,5.6 6,6.4 5,7.2 3,6.2"/><polygon points="6.8,6.7 8.7,7.5 8,8.1 6,7.2"/></g>
<polygon points="6,0.5 13.6,3.6 13.6,10 8,14.4 0.6,11.2 0.6,5" fill="none" stroke="#2c5c96" stroke-width="1" stroke-linejoin="round"/></svg>
<span style="left:679.34px;top:304.00px;color:#006100;font-size:11px;letter-spacing:-0.626px;">0EPM_C02</span>
<span style="left:977.86px;top:304.00px;color:#006100;font-size:11px;letter-spacing:-0.330px;">A4H</span>
<svg style="left:1079px;top:309px" width="14" height="11" viewBox="0 0 14 11"><path d="M0.6 2.8V8.2C0.6 9.6 3.4 10.5 7 10.5S13.4 9.6 13.4 8.2V2.8Z" fill="url(#gCylBody)" stroke="#0a4a9e" stroke-width="1"/>
<ellipse cx="7" cy="2.7" rx="6.3" ry="2.1" fill="#e4eefc" stroke="#0a4a9e" stroke-width="1"/></svg>
<span style="left:1113.34px;top:304.00px;color:#006100;font-size:11px;letter-spacing:-0.775px;">0EPM_ADSO3</span>
<span style="left:1408.22px;top:304.00px;color:#006100;font-size:11px;letter-spacing:0.047px;">Comment Transfer valid. Ready for transfer.</span>
<div style="left:540px;top:324px;width:1349px;height:19px;background:#ffeb9c;"></div>
<div style="left:540px;top:343px;width:1349px;height:1px;background:#d4d2d6;"></div>
<div style="left:627px;top:324px;width:1px;height:19px;background:rgba(150,150,160,.45);"></div>
<div style="left:677px;top:324px;width:1px;height:19px;background:rgba(150,150,160,.45);"></div>
<div style="left:973px;top:324px;width:1px;height:19px;background:rgba(150,150,160,.45);"></div>
<div style="left:1061px;top:324px;width:1px;height:19px;background:rgba(150,150,160,.45);"></div>
<div style="left:1111px;top:324px;width:1px;height:19px;background:rgba(150,150,160,.45);"></div>
<div style="left:1406px;top:324px;width:1px;height:19px;background:rgba(150,150,160,.45);"></div>
<span style="left:543.00px;top:324.00px;color:#9c5700;font-size:11px;letter-spacing:0.785px;">BI2</span>
<svg style="left:645px;top:326px" width="15" height="15" viewBox="0 0 15 15"><polygon points="0.6,5 8,8.2 8,14.4 0.6,11.2" fill="#b2c8de"/>
<polygon points="8,8.2 13.6,3.6 13.6,10 8,14.4" fill="url(#gICr)"/>
<polygon points="6,0.5 13.6,3.6 8,8.2 0.6,5" fill="#fffce8"/>
<g fill="#f0d63c"><polygon points="6,0.9 7.9,1.7 6.2,3.1 4.3,2.3"/><polygon points="8.7,2 10.6,2.8 8.9,4.2 7,3.4"/><polygon points="11.4,3.1 13,3.8 11.6,5.3 9.7,4.5"/>
<polygon points="3.7,2.7 5.6,3.5 3.9,4.9 2,4.1"/><polygon points="6.4,3.8 8.3,4.6 6.6,6 4.7,5.2"/><polygon points="9.1,4.9 11,5.7 9.3,7.1 7.4,6.3"/>
<polygon points="1.6,4.5 3.3,5.3 2.2,6 0.9,5"/><polygon points="4.1,5.6 6,6.4 5,7.2 3,6.2"/><polygon points="6.8,6.7 8.7,7.5 8,8.1 6,7.2"/></g>
<polygon points="6,0.5 13.6,3.6 13.6,10 8,14.4 0.6,11.2 0.6,5" fill="none" stroke="#2c5c96" stroke-width="1" stroke-linejoin="round"/></svg>
<span style="left:679.34px;top:324.00px;color:#9c5700;font-size:11px;letter-spacing:-0.651px;">0EPM_C01</span>
<span style="left:977.86px;top:324.00px;color:#9c5700;font-size:11px;letter-spacing:-0.330px;">A4H</span>
<svg style="left:1079px;top:329px" width="14" height="11" viewBox="0 0 14 11"><path d="M0.6 2.8V8.2C0.6 9.6 3.4 10.5 7 10.5S13.4 9.6 13.4 8.2V2.8Z" fill="url(#gCylBody)" stroke="#0a4a9e" stroke-width="1"/>
<ellipse cx="7" cy="2.7" rx="6.3" ry="2.1" fill="#e4eefc" stroke="#0a4a9e" stroke-width="1"/></svg>
<span style="left:1113.34px;top:324.00px;color:#9c5700;font-size:11px;letter-spacing:-0.739px;">0EPM_ADSO1</span>
<span style="left:1408.61px;top:324.00px;color:#9c5700;font-size:11px;letter-spacing:0.060px;">Warning. Existing comment of the target object will be overwritten. Ready for transfer.</span>
<svg style="left:954.5px;top:306.5px" width="17" height="15" viewBox="0 0 17 15"><path d="M8.4 1C12.6 1 16 3.4 16 6.5S12.6 12 8.4 12C7.3 12 6.3 11.85 5.4 11.6C4.6 12.8 3.6 13.6 2.4 14C3.1 13.1 3.5 12 3.5 10.7C1.9 9.7 0.9 8.2 0.9 6.5C0.9 3.4 4.2 1 8.4 1Z" fill="none" stroke="#333" stroke-width="1.1" stroke-linejoin="round"/>
<path d="M3.2 5.6C4.2 3.9 6 3 8 2.8" fill="none" stroke="#333" stroke-width=".6" opacity=".7"/></svg>
<svg style="left:1387.5px;top:326.5px" width="17" height="15" viewBox="0 0 17 15"><path d="M8.4 1C12.6 1 16 3.4 16 6.5S12.6 12 8.4 12C7.3 12 6.3 11.85 5.4 11.6C4.6 12.8 3.6 13.6 2.4 14C3.1 13.1 3.5 12 3.5 10.7C1.9 9.7 0.9 8.2 0.9 6.5C0.9 3.4 4.2 1 8.4 1Z" fill="none" stroke="#333" stroke-width="1.1" stroke-linejoin="round"/>
<path d="M3.2 5.6C4.2 3.9 6 3 8 2.8" fill="none" stroke="#333" stroke-width=".6" opacity=".7"/></svg>
<svg style="left:530px;top:310.5px" width="4" height="7" viewBox="0 0 4 7"><polygon points="0,0 4,3.5 0,7" fill="#111"/></svg>
<div style="left:1889px;top:303px;width:17px;height:297px;background:#f0f0f0;"></div>
<div style="left:1890px;top:305px;width:15px;height:15px;background:#f3f3f3;border:1px solid #dcdcdc;box-sizing:border-box;"></div>
<svg style="left:1894.0px;top:310.0px" width="7" height="4" viewBox="0 0 7 4"><polygon points="0,4 7,4 3.5,0" fill="#b4b4b4"/></svg>
<div style="left:1890px;top:584px;width:15px;height:15px;background:#f3f3f3;border:1px solid #dcdcdc;box-sizing:border-box;"></div>
<svg style="left:1894.0px;top:590.0px" width="7" height="4" viewBox="0 0 7 4"><polygon points="0,0 7,0 3.5,4" fill="#b4b4b4"/></svg>
<div style="left:523px;top:601px;width:1384px;height:1px;background:#dcdcdc;"></div>
<div style="left:523px;top:602px;width:1384px;height:4px;background:#ababab;"></div>
<span style="left:526.93px;top:614.00px;color:#444;font-size:12px;letter-spacing:0.042px;">Comment Language</span>
<div style="left:639px;top:613px;width:100px;height:22px;background:#fff;border:1px solid #adadad;box-sizing:border-box;"></div>
<span style="left:643.40px;top:614.00px;color:#444;font-size:12px;letter-spacing:-0.225px;">En (English)</span>
<svg style="left:726px;top:623px" width="8" height="4" viewBox="0 0 8 4"><polygon points="0,0 8,0 4.0,4" fill="#404040"/></svg>
<svg style="left:1888px;top:616px" width="15" height="15" viewBox="0 0 15 15"><rect x=".5" y=".5" width="14" height="14" rx="1.8" fill="#f4f4f4" stroke="#b4b4b4" stroke-width="1"/>
<path d="M3.6 3.4L11.4 11.4M11.4 3.4L3.6 11.4" stroke="#b8262c" stroke-width="2"/></svg>
<svg style="left:528.5px;top:641px" width="15" height="15" viewBox="0 0 15 15"><polygon points="0.6,5 8,8.2 8,14.4 0.6,11.2" fill="#b2c8de"/>
<polygon points="8,8.2 13.6,3.6 13.6,10 8,14.4" fill="url(#gICr)"/>
<polygon points="6,0.5 13.6,3.6 8,8.2 0.6,5" fill="#fffce8"/>
<g fill="#f0d63c"><polygon points="6,0.9 7.9,1.7 6.2,3.1 4.3,2.3"/><polygon points="8.7,2 10.6,2.8 8.9,4.2 7,3.4"/><polygon points="11.4,3.1 13,3.8 11.6,5.3 9.7,4.5"/>
<polygon points="3.7,2.7 5.6,3.5 3.9,4.9 2,4.1"/><polygon points="6.4,3.8 8.3,4.6 6.6,6 4.7,5.2"/><polygon points="9.1,4.9 11,5.7 9.3,7.1 7.4,6.3"/>
<polygon points="1.6,4.5 3.3,5.3 2.2,6 0.9,5"/><polygon points="4.1,5.6 6,6.4 5,7.2 3,6.2"/><polygon points="6.8,6.7 8.7,7.5 8,8.1 6,7.2"/></g>
<polygon points="6,0.5 13.6,3.6 13.6,10 8,14.4 0.6,11.2 0.6,5" fill="none" stroke="#2c5c96" stroke-width="1" stroke-linejoin="round"/></svg>
<span style="left:548.43px;top:640.00px;color:#000;font-size:14px;font-weight:bold;letter-spacing:0.294px;">Source: 0EPM_C02 - Completed Purchase Orders (NW Demo EPM)</span>
<svg style="left:1223.5px;top:643.5px" width="14" height="11" viewBox="0 0 14 11"><path d="M0.6 2.8V8.2C0.6 9.6 3.4 10.5 7 10.5S13.4 9.6 13.4 8.2V2.8Z" fill="url(#gCylBody)" stroke="#0a4a9e" stroke-width="1"/>
<ellipse cx="7" cy="2.7" rx="6.3" ry="2.1" fill="#e4eefc" stroke="#0a4a9e" stroke-width="1"/></svg>
<span style="left:1244.36px;top:640.00px;color:#000;font-size:14px;font-weight:bold;letter-spacing:0.292px;">Target: 0EPM_ADSO3 - ADSO for Open Purchase Orders ( EPM NW Demo )</span>
<article>
<div style="left:523px;top:663px;width:674px;height:288px;background:#fff;"></div>
<div style="left:1197px;top:663px;width:16px;height:288px;background:#f8f8f8;"></div>
<div style="left:1197px;top:664px;width:15px;height:15px;background:#f3f3f3;border:1px solid #a8a8a8;box-sizing:border-box;"></div>
<svg style="left:1201px;top:669.5px" width="7" height="4" viewBox="0 0 7 4"><polygon points="0,4 7,4 3.5,0" fill="#444"/></svg>
<div style="left:1197px;top:935px;width:15px;height:15px;background:#f3f3f3;border:1px solid #a8a8a8;box-sizing:border-box;"></div>
<svg style="left:1201px;top:940.5px" width="7" height="4" viewBox="0 0 7 4"><polygon points="0,0 7,0 3.5,4" fill="#444"/></svg>
<div style="left:1197px;top:679px;width:15px;height:222px;background:#f0f0f0;border:1px solid #a8a8a8;box-sizing:border-box;"></div>
<div style="left:1213px;top:636px;width:4px;height:315px;background:#ababab;"></div>
<span style="left:539.18px;top:713.00px;color:#000;font-size:15px;font-weight:bold;font-style:italic;">1</span>
<span style="left:566.20px;top:713.00px;color:#000;font-size:15px;font-weight:bold;font-style:italic;letter-spacing:-0.181px;">Objective</span>
<span style="left:538.52px;top:756.00px;color:#000;font-size:14px;letter-spacing:-0.011px;">This InfoCube contains delivery related indicators and key figures for purchase order items. These</span>
<span style="left:537.70px;top:779.00px;color:#000;font-size:14px;letter-spacing:-0.007px;">indicators and key figures are based on the associated confirmation and goods receipt documents.</span>
<span style="left:538.75px;top:844.00px;color:#000;font-size:15px;font-weight:bold;font-style:italic;">2</span>
<span style="left:566.00px;top:844.00px;color:#000;font-size:15px;font-weight:bold;font-style:italic;letter-spacing:-0.172px;">Business Aspects</span>
<span style="left:538.52px;top:887.00px;color:#000;font-size:14px;letter-spacing:-0.010px;">The InfoCube provides insight into the delivery service of vendors by exploring deviations across the</span>
<span style="left:538.17px;top:909.50px;color:#000;font-size:14px;letter-spacing:-0.015px;">entire delivery process, between purchase orders, confirmations and goods receipts for example. It can</span>
<span style="left:538.61px;top:932.00px;color:#000;font-size:14px;letter-spacing:-0.018px;">therefore be used to compare delivery KPIs, such as delivery scores (time, quantity and quality reliability)</span>
</article>
<article>
<div style="left:1218px;top:663px;width:673px;height:288px;background:#fff;"></div>
<div style="left:1892px;top:664px;width:15px;height:15px;background:#f3f3f3;border:1px solid #dcdcdc;box-sizing:border-box;"></div>
<svg style="left:1896.0px;top:669.0px" width="7" height="4" viewBox="0 0 7 4"><polygon points="0,4 7,4 3.5,0" fill="#b4b4b4"/></svg>
<div style="left:1892px;top:935px;width:15px;height:15px;background:#f3f3f3;border:1px solid #dcdcdc;box-sizing:border-box;"></div>
<svg style="left:1896.0px;top:941.0px" width="7" height="4" viewBox="0 0 7 4"><polygon points="0,0 7,0 3.5,4" fill="#b4b4b4"/></svg>
<span style="left:1233.54px;top:713.00px;color:#000;font-size:15px;font-weight:bold;font-style:italic;">1</span>
<span style="left:1260.00px;top:713.00px;color:#000;font-size:15px;font-weight:bold;font-style:italic;letter-spacing:-0.044px;">Objective</span>
<span style="left:1233.25px;top:794.00px;color:#000;font-size:15px;font-weight:bold;font-style:italic;">2</span>
<span style="left:1260.84px;top:794.00px;color:#000;font-size:15px;font-weight:bold;font-style:italic;letter-spacing:-0.146px;">Business Aspects</span>
</article>
<div style="left:512px;top:962px;width:1406px;height:1px;background:#b4b4b4;"></div>
<div style="left:1752px;top:965px;width:163px;height:41px;border:3px solid #d49a38;box-sizing:border-box;"></div>
<div style="left:1759px;top:973px;width:150px;height:25px;background:#fcfcfc;border:1px solid #9c9c9c;box-sizing:border-box;"></div>
<span style="left:1798.30px;top:976.00px;color:#404040;font-size:11px;letter-spacing:0.174px;">Start Transfer</span>
</main>
<footer>
<div style="left:0px;top:1008px;width:1920px;height:1px;background:#6e6e6e;"></div>
<div style="left:0px;top:1009px;width:1920px;height:1px;background:#a4a4a4;"></div>
<div style="left:0px;top:1010px;width:1920px;height:29px;background:#f8f8f8;"></div>
<div style="left:0px;top:1010px;width:1px;height:29px;background:#9a9a9a;"></div>
<div style="left:1918px;top:1010px;width:2px;height:29px;background:#ababab;"></div>
<div style="left:0px;top:1038px;width:1920px;height:1px;background:#fdfdfd;"></div>
<svg style="left:6.5px;top:1014.1px" width="15" height="18" viewBox="0 0 15 18"><path d="M0.6 2.4Q0.6 1.4 1.6 1.3L8.4 1L13.4 3.2Q13.8 3.4 13.8 4V14Q13.8 14.8 13 15L5.4 16.6Q4.8 16.7 4.2 16.3L1 13.6Q0.6 13.3 0.6 12.8Z" fill="#ececec" stroke="#5c5c5c" stroke-width="1" stroke-linejoin="round"/>
<path d="M0.9 2.2L5 4.6V16.4L0.9 13.2Z" fill="#cdcdcd"/>
<path d="M5 4.6L13.6 3.8" stroke="#8a8a8a" stroke-width=".6"/><path d="M5 4.6V16.4" stroke="#7a7a7a" stroke-width=".8"/>
<g stroke="#8c8c8c" stroke-width="1"><path d="M6.6 6.4H12.6M6.6 8.4H12.6M6.6 10.4H12.6M6.6 12.4H12.6"/></g><path d="M6.6 14.3H12.6" stroke="#9a9a9a" stroke-width="1"/><rect x="8.6" y="13.7" width="1.3" height="1.2" fill="#fff"/><rect x="10.6" y="13.7" width="1.3" height="1.2" fill="#fff"/></svg>
<div style="left:31px;top:1013px;width:107px;height:23px;background:#fff;border:1px solid #adadad;box-sizing:border-box;"></div>
<span style="left:49.50px;top:1015.00px;color:#404040;font-size:11px;letter-spacing:-0.102px;">Select system</span>
<span style="left:143.20px;top:1014.50px;color:#404040;font-size:11px;font-weight:bold;letter-spacing:1.300px;">BI2</span>
<span style="left:168.09px;top:1014.50px;color:#404040;font-size:11px;letter-spacing:-0.218px;">(BW)</span>
<svg style="left:200.5px;top:1015px" width="17" height="16" viewBox="0 0 17 16"><path d="M0.8 15.2L6 10M11 5L16.2 0.8" stroke="#4a4a4a" stroke-width="1.3"/>
<g transform="rotate(-45 8.5 7.6)"><rect x="3.4" y="4.4" width="4.6" height="6.4" rx="1.4" fill="#3c9ae0" stroke="#1f5f9c" stroke-width=".7"/><rect x="9" y="4.4" width="4.6" height="6.4" rx="1.4" fill="#58b0ec" stroke="#1f5f9c" stroke-width=".7"/></g></svg>
<div style="left:226px;top:1013px;width:75px;height:23px;background:#fff;border:1px solid #adadad;box-sizing:border-box;"></div>
<span style="left:235.30px;top:1015.00px;color:#404040;font-size:11px;letter-spacing:-0.122px;">Disconnect</span>
<div style="left:1649px;top:1012px;width:27px;height:24px;background:#fff;border:1px solid #adadad;box-sizing:border-box;"></div>
<svg style="left:1656px;top:1016px" width="12" height="16" viewBox="0 0 12 16"><path d="M0.5 0.5H7.6L11.5 4.2V15.5H0.5Z" fill="#f4f4f4" stroke="#b8b8b8" stroke-width="1"/>
<g stroke="#cfcfcf" stroke-width=".7"><path d="M2 4.5H9.5M2 7H9.5M2 9.5H9.5M2 12H9.5M4.4 3V13.6M7 3V13.6"/></g>
<path d="M7.2 7.6L8.6 9L11 6M7.2 12L8.6 13.4L11 10.4" fill="none" stroke="#3ab4dc" stroke-width="1.1"/></svg>
<div style="left:1682px;top:1012px;width:27px;height:24px;background:#fff;border:1px solid #adadad;box-sizing:border-box;"></div>
<svg style="left:1688.5px;top:1017.3px" width="12.219999999999999" height="13.629999999999999" viewBox="0 0 26 29"><path d="M5.7 17.7C2 14 0 9 1.6 5.6C3 2.6 6.5 2.2 12.8 4.6L13.5 1.5C15 5 17 8 18.4 9.5C15 8.6 12 9.4 9 10.6L10.8 8.4C8.6 6.6 5.6 7.2 4.4 10.4C3.6 12.8 4.4 15.4 5.7 17.7Z" fill="#1c6cba"/><path d="M5.7 17.7C2 14 0 9 1.6 5.6C3 2.6 6.5 2.2 12.8 4.6L13.5 1.5C15 5 17 8 18.4 9.5C15 8.6 12 9.4 9 10.6L10.8 8.4C8.6 6.6 5.6 7.2 4.4 10.4C3.6 12.8 4.4 15.4 5.7 17.7Z" fill="#189cdc" transform="rotate(180 13.05 14.4)"/></svg>
<svg style="left:1716.5px;top:1015px" width="17" height="16" viewBox="0 0 17 16"><path d="M0.8 2.4V11.6C0.8 13 3.6 14 7 14S13.2 13 13.2 11.6V2.4Z" fill="url(#gDb)" stroke="#a4acb0" stroke-width=".7"/>
<path d="M0.8 7C0.8 8.4 3.6 9.4 7 9.4S13.2 8.4 13.2 7" fill="none" stroke="#a4acb0" stroke-width=".8"/><path d="M1.2 8C1.2 9.4 3.8 10.3 7 10.3" fill="none" stroke="#fafafa" stroke-width=".7"/>
<ellipse cx="7" cy="2.5" rx="6.2" ry="2" fill="#e6eaea" stroke="#a4acb0" stroke-width=".7"/>
<rect x="6.9" y="5.3" width="9.4" height="9.6" rx=".9" fill="#1c8ed0"/>
<rect x="8" y="6.4" width="7.2" height="7.6" fill="#86d0f6"/>
<rect x="9.4" y="5.9" width="4.4" height="2.6" fill="#e4f4fc"/><rect x="9.8" y="11" width="3.6" height="3.4" fill="#fff"/><rect x="11" y="12.2" width="1" height="1.6" fill="#1c6ea8"/>
<path d="M8.6 6.4V14M14.6 6.4V14" stroke="#1c8ed0" stroke-width=".9"/></svg>
<span style="left:1734.80px;top:1013.00px;color:#404040;font-size:11px;letter-spacing:-0.388px;">SQLite</span>
<svg style="left:1776px;top:1015px" width="15" height="15" viewBox="0 0 15 15"><path d="M0.8 14.2V12.2Q0.8 10 3.4 9.4L5.6 8.8L7.3 10.4L9 8.8L11.2 9.4Q13.8 10 13.8 12.2V14.2Z" fill="#dfe2f4" stroke="#2a2ea6" stroke-width="1" stroke-linejoin="round"/>
<path d="M2 13.6H12.6" stroke="#b8bce0" stroke-width=".8"/>
<path d="M5 4.2Q7 3.6 9.4 4.4L9.8 7.2Q9 9.4 7.3 9.6Q5.6 9.4 5 7.4Z" fill="#fbd9b0"/>
<path d="M4 6.8C3 2.6 5.2 0.4 7.8 0.4S11.8 2 11.2 5.4C10.8 6.6 10.4 7 10 7.4C10 5.6 9.4 4.8 8 4.4C6.4 4.6 5.4 5 4.8 7.4Z" fill="#9a5c10"/><path d="M6 1.4Q8 0.6 9.6 2" stroke="#d8a030" stroke-width=".8" fill="none"/></svg>
<span style="left:1793.86px;top:1013.00px;color:#404040;font-size:11px;letter-spacing:-0.174px;">Admin (Full administrator)</span>
<div style="left:0px;top:1039px;width:1920px;height:9px;background:#1b1b1b;background:linear-gradient(90deg,#0a1a2c 0,#0a1a2c 500px,#242424 820px,#1e1e1e 1029px,#4c4c4c 1030px,#4c4c4c 1078px,#1b1b1b 1079px,#1b1b1b 100%);"></div>
<div style="left:0px;top:1039px;width:1920px;height:1px;background:#4c4c4c;"></div>
<div style="left:48px;top:1040px;width:344px;height:8px;background:#f0f0f0;"></div>
<div style="left:48px;top:1040px;width:1px;height:8px;background:#fff;"></div>
<div style="left:1915px;top:1039px;width:1px;height:9px;background:#7a7a7a;"></div>
<span style="left:1820px;top:1046.5px;font-size:12px;line-height:14px;color:#fff;letter-spacing:-.2px">15:57</span>
</footer>
</body></html>
